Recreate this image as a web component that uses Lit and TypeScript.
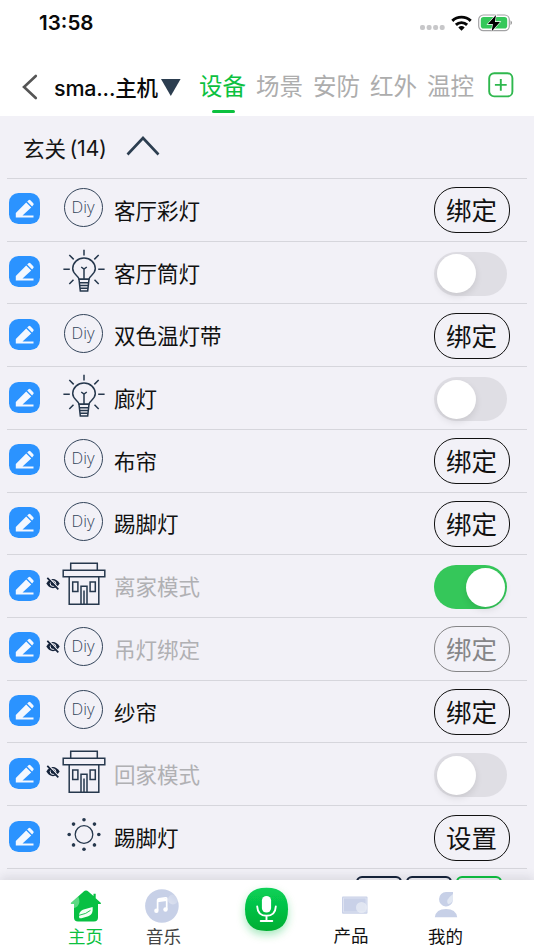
import { LitElement, html, css, svg, nothing } from "lit";
import { customElement, property } from "lit/decorators.js";
import { classMap } from "lit/directives/class-map.js";

type IconName = "diy" | "bulb" | "house" | "sun";
type Control = "bind" | "set" | "on" | "off";

interface Device {
  name: string;
  icon: IconName;
  control: Control;
  hidden?: boolean;
}

const DEVICES: Device[] = [
  { name: "客厅彩灯", icon: "diy", control: "bind" },
  { name: "客厅筒灯", icon: "bulb", control: "off" },
  { name: "双色温灯带", icon: "diy", control: "bind" },
  { name: "廊灯", icon: "bulb", control: "off" },
  { name: "布帘", icon: "diy", control: "bind" },
  { name: "踢脚灯", icon: "diy", control: "bind" },
  { name: "离家模式", icon: "house", control: "on", hidden: true },
  { name: "吊灯绑定", icon: "diy", control: "bind", hidden: true },
  { name: "纱帘", icon: "diy", control: "bind" },
  { name: "回家模式", icon: "house", control: "off", hidden: true },
  { name: "踢脚灯", icon: "sun", control: "set" },
];

const INK = "#26384d";

const deviceIcons = {
  bulb: svg`
    <g fill="none" stroke=${INK} stroke-width="1.5">
      <path d="M17.2 30.300C16.700 26.600 10.700 25.600 10.700 19.600a11.300 10.600 0 0 1 22.600 0C33.300 25.600 27.300 26.600 26.800 30.300Z"/>
      <path d="M17 30.300h10l-1.300 11.600h-7.400zM17.500 33.800h9M17.800 36.500h8.400M18.200 39.200h7.600"/>
      <path d="M22 30V19.600M19.200 18l2.800 2 2.800-2"/>
      <path d="M22 .7v5.800M1.400 20.200h6.400M36.200 20.200h6.400M7.300 6l4.400 4.400M36.700 6l-4.400 4.400M7.300 35l4.200-4.200M36.700 35l-4.200-4.200"/>
    </g>`,
  house: svg`
    <g fill="none" stroke=${INK} stroke-width="1.500">
      <path d="M8.700 7.600V1.300h26.600v6.300M1.200 8.200h41.600v6.600H1.200zM7.200 14.800h29.600v27.400H7.200zM10.700 20h5.200v9.400h-5.200zM28.100 20h5.200v9.400h-5.200zM19 42V24.200h6V42M22 42V28.500"/>
    </g>`,
  sun: svg`
    <circle cx="22" cy="21.500" r="8.800" fill="none" stroke=${INK} stroke-width="1.300"/>
    <g fill=${INK}>
      ${[0, 45, 90, 135, 180, 225, 270, 315].map(
        (a) => svg`<circle cx="22" cy="6.700" r="1.800" transform="rotate(${a} 22 21.5)"/>`,
      )}
    </g>`,
};

@customElement("device-row")
export class DeviceRow extends LitElement {
  @property({ attribute: false }) device!: Device;

  static styles = css`
    :host { display: block; }
    .row {
      box-sizing: border-box;
      height: 62.73px;
      margin: 0 7px;
      border-bottom: 1.5px solid #d6d6dc;
      display: grid;
      grid-template-columns: 38px 17px 45px 1fr auto;
      align-items: center;
      color: #111;
    }
    .edit { display: block; width: 31px; height: 31px; margin: 0 0 2px 1.6px; }
    .eye { display: block; width: 14px; height: 13px; margin: 0 0 5px 0.5px; }
    .icon {
      display: flex; justify-content: center; align-items: center;
      width: 44px; height: 44px; margin-bottom: 4px;
    }
    .icon svg { display: block; width: 44px; height: 44px; flex: none; }
    .diy-slot { width: 43px; }
    .diy {
      box-sizing: border-box; width: 39px; height: 39px; border-radius: 50%;
      border: 1.4px solid #33445a; color: #33445a;
      font: 300 16.500px/35px "Open Sans", "Inter", sans-serif;
      text-align: center; text-indent: -1px;
    }
    .name {
      font-size: 21.500px; line-height: 30px; margin: 0 0 0 7px; white-space: nowrap;
    }
    .muted { color: #b0b0b3; }
    .pill {
      box-sizing: border-box; width: 76px; height: 46px; margin: 1px 17px 0 0;
      border: 1.700px solid #111; border-radius: 22px; color: #111;
      font: 400 25.500px/42px "Noto Sans CJK SC", sans-serif;
      text-align: center; text-indent: -1px;
    }
    .pill.muted { color: #858587; border-color: #858587; }
    .toggle {
      box-sizing: border-box; width: 73px; height: 44px; border-radius: 22px;
      margin: 2px 20px 0 0; padding: 2.500px; background: #dfdee4; display: flex;
    }
    .toggle.on { background: #35c75a; justify-content: flex-end; }
    .knob {
      width: 39px; height: 39px; border-radius: 50%; background: #fff;
      box-shadow: 0 3px 7px rgba(0, 0, 0, 0.1);
    }
  `;

  private renderControl(d: Device) {
    if (d.control === "on" || d.control === "off") {
      return html`<div class=${classMap({ toggle: true, on: d.control === "on" })}><div class="knob"></div></div>`;
    }
    return html`<div class=${classMap({ pill: true, muted: !!d.hidden })}>${d.control === "bind" ? "绑定" : "设置"}</div>`;
  }

  render() {
    const d = this.device;
    return html`
      <div class="row">
        <svg class="edit" viewBox="0 0 31 31">
          <rect width="31" height="31" rx="9.500" fill="#2b93ff"/>
          <g fill="#f4f8ff">
            <path d="M6.800 24.400V19.900L17.200 9.500l5 5L13.500 22.500H24.500v1.900z"/>
            <path d="M18.200 8.600l1.300-1.300q1-.9 1.900 0l2.900 2.900q.9.900 0 1.900L23.100 13.500z"/>
          </g>
        </svg>
        ${d.hidden
          ? html`<svg class="eye" viewBox="0 0 14 13">
              <path d="M.3 6.600Q3.200 2 7 2t6.700 4.600Q10.800 11.200 7 11.200T.3 6.600z" fill="#15233a"/>
              <circle cx="7" cy="6.600" r="2.800" fill="#15233a" stroke="#f2f1f7" stroke-width="1"/>
              <path d="M2.700.3l10.300 11.200" stroke="#f2f1f7" stroke-width="1.300"/>
              <path d="M1.300 .8l11 11.600" stroke="#15233a" stroke-width="1.700"/>
            </svg>`
          : html`<span></span>`}
        <div class=${classMap({ icon: true, "diy-slot": d.icon === "diy" })}>
          ${d.icon === "diy"
            ? html`<div class="diy">Diy</div>`
            : html`<svg viewBox="0 0 44 44">${deviceIcons[d.icon]}</svg>`}
        </div>
        <div class=${classMap({ name: true, muted: !!d.hidden })}>${d.name}</div>
        ${this.renderControl(d)}
      </div>
    `;
  }
}

@customElement("app-root")
export class AppRoot extends LitElement {
  static styles = css`
    :host {
      display: flex; flex-direction: column; width: 534px; height: 950px;
      overflow: hidden; background: #f2f1f7; color: #111;
      font-family: "Noto Sans CJK SC", sans-serif;
    }
    .status {
      height: 46px; flex: none; background: #fff; display: flex; align-items: center;
      justify-content: space-between; padding: 0 21px 0 39px;
    }
    .time { font: 600 20.600px/46px "Inter", sans-serif; color: #0a0a0a; }
    .indicators { display: flex; align-items: center; }
    .indicators svg { display: block; }
    .dots { margin: 9px 6px 0 0; }
    .wifi { margin: 0 6px 1px 0; }
    .nav { height: 70px; flex: none; background: #fff; display: flex; align-items: flex-start; }
    .back { display: block; margin: 28px 0 0 21px; }
    .host {
      margin: 25px 0 0 16px; width: 106px; white-space: nowrap;
      font: 500 21.500px/34px "Inter", "Noto Sans CJK SC", sans-serif; letter-spacing: -0.200px; color: #0a0a0a;
    }
    .caret { display: block; margin: 33px 0 0 1px; }
    .tabs { display: flex; gap: 10px; margin-left: 18px; }
    .tab { width: 47px; height: 68px; font-size: 23.500px; line-height: 34px; padding-top: 22px; box-sizing: border-box;
      color: #adadad; white-space: nowrap; display: flex; flex-direction: column; align-items: center; }
    .tab.active { color: #0cc13f; }
    .bar { width: 23px; height: 3px; border-radius: 1.500px; background: #0cc13f; margin: 8px 0 0 2px; }
    .add { display: block; margin: 26px 0 0 13.500px; }
    .section {
      box-sizing: border-box; height: 63px; flex: none; margin: 0 7px; padding-left: 16px;
      border-bottom: 1.500px solid #d6d6dc; display: flex; align-items: center;
      font-size: 21.500px; color: #151515;
    }
    .count { font-family: "Inter", sans-serif; font-size: 21.500px; margin: 2px 0 0 3.500px; letter-spacing: -0.300px; }
    .chevron { display: block; margin: 0 0 2px 19.500px; }
    .list { flex: 1; min-height: 0; overflow: hidden; }
    .more { display: flex; gap: 4px; padding: 7px 0 0 356px; }
    .chip { box-sizing: border-box; width: 46px; height: 36px; border: 2.500px solid #15233a; border-radius: 6px; }
    .chip.green { border-color: #0cc13f; }
    .tabbar {
      position: relative; height: 70px; flex: none; background: #fff; display: grid;
      grid-template-columns: 126px 75px 130px 40px 149px;
      box-shadow: 0 -3px 10px rgba(40, 40, 60, 0.12);
    }
    .item { display: flex; flex-direction: column; align-items: center; }
    .item svg { display: block; flex: none; }
    .label { font-size: 17.500px; line-height: 24px; white-space: nowrap; }
    .home { padding-left: 45px; }
    .home .label { color: #0cc13f; margin-top: 2px; }
    .music .label { color: #444; }
    .music svg { margin-right: 3px; }
  `;

  render() {
    return html`
      <div class="status">
        <div class="time">13:58</div>
        <div class="indicators">
          <svg class="dots" width="25" height="5" viewBox="0 0 25 5" fill="#c7c7c9">
            <rect width="5" height="5" rx="2"/><rect x="6.600" width="5" height="5" rx="2"/>
            <rect x="13.100" width="5" height="5" rx="2"/><rect x="19.700" width="5" height="5" rx="2"/>
          </svg>
          <svg class="wifi" width="21" height="16" viewBox="0 0 21 16">
            <g fill="none" stroke="#050505" stroke-width="2.900">
              <path d="M1.300 5.900a13.200 13.200 0 0 1 18.400 0"/>
              <path d="M4.900 9.900a8 8 0 0 1 11.200 0"/>
            </g>
            <path d="M7.300 12.500a4.700 4.700 0 0 1 6.400 0L10.500 15.800z" fill="#050505"/>
          </svg>
          <svg width="35" height="18" viewBox="0 0 35 18">
            <rect x=".7" y="1" width="30.600" height="15.600" rx="4.600" fill="#fff" stroke="#a2a2a4" stroke-width="1.200"/>
            <rect x="2.800" y="3.100" width="26.400" height="11.400" rx="2.800" fill="#34c759"/>
            <path d="M32.600 6.300q2.400 2.500 0 5z" fill="#777"/>
            <path d="M18 .9L9.800 10.100H14.900L13.600 17.400 22 7.900H16.900z" fill="#000" stroke="#fff" stroke-width="1.200" paint-order="stroke"/>
          </svg>
        </div>
      </div>
      <div class="nav">
        <svg class="back" width="17" height="26" viewBox="0 0 17 26">
          <path d="M14.800 2L3 13l11.800 11" fill="none" stroke="#555" stroke-width="2.600" stroke-linecap="round"/>
        </svg>
        <div class="host">sma...主机</div>
        <svg class="caret" width="20" height="17" viewBox="0 0 20 17"><path d="M0 0h19.600L9.800 17z" fill="#2c3e50"/></svg>
        <div class="tabs">
          ${["设备", "场景", "安防", "红外", "温控"].map(
            (t, i) => html`<div class=${classMap({ tab: true, active: i === 0 })}>${t}${i === 0 ? html`<div class="bar"></div>` : nothing}</div>`,
          )}
        </div>
        <svg class="add" width="26" height="26" viewBox="0 0 26 26">
          <rect x="1.200" y="1.200" width="23.200" height="23.200" rx="5" fill="none" stroke="#2fb84e" stroke-width="1.900"/>
          <path d="M12.800 7v11.800M6.900 12.900h11.800" stroke="#2fb84e" stroke-width="1.900"/>
        </svg>
      </div>
      <div class="section">
        <span>玄关</span><span class="count">(14)</span>
        <svg class="chevron" width="34" height="20" viewBox="0 0 34 20">
          <path d="M1.500 18.500L17 2l15.500 16.500" fill="none" stroke="#2c3e50" stroke-width="2.600"/>
        </svg>
      </div>
      <div class="list">
        ${DEVICES.map((d) => html`<device-row .device=${d}></device-row>`)}
        <div class="more"><div class="chip"></div><div class="chip"></div><div class="chip green"></div></div>
      </div>
      <div class="tabbar">
        <div class="item home">
          <svg width="32" height="42" viewBox="0 0 32 42">
            <path d="M16 10.600q1.300 0 2.300 1L23.500 16v-2.300h2.200v4.500l5 4.500q1.100 1.200-.6 1.200H28v13.500q0 4-4 4H8q-4 0-4-4V24H1.800Q0 24 1.200 22.700L13.700 11.600q1-1 2.300-1z" fill="#08c043"/>
            <path d="M1.200 22.700L8.200 16.500Q10.900 22 7.500 26.300 5.500 28 4 28V24H1.800Q0 24 1.200 22.700z" fill="#8be6a6" opacity=".65"/>
            <path d="M9.400 38.300C8.200 33.500 10 30.500 14.500 29.200L22.600 27C23.200 32.500 21.500 35.500 17.500 36.500L11.500 38.300z" fill="#f4fff6"/>
            <path d="M9 35.300Q16.500 34 20.500 30.300" stroke="#08c043" stroke-width=".9" fill="none"/>
          </svg>
          <div class="label">主页</div>
        </div>
        <div class="item music">
          <svg width="34" height="44" viewBox="0 0 34 44">
            <defs><linearGradient id="shine" x1="1" y1="0" x2="0" y2="1"><stop offset="0" stop-color="#fff" stop-opacity=".05"/><stop offset="1" stop-color="#fff" stop-opacity=".4"/></linearGradient></defs>
            <circle cx="16.900" cy="26" r="16.800" fill="#c7d0e7"/>
            <circle cx="28" cy="19.500" r="5" fill="url(#shine)"/>
            <path d="M12.600 30V20.200q0-1.200 1.200-1.400l6.700-1q1.200-.1 1.200 1V28.900" fill="none" stroke="#fff" stroke-width="1.700"/>
            <path d="M12.500 19h9.200v1.900l-9.200 1.400z" fill="#fff"/>
            <circle cx="11.400" cy="30.800" r="2.200" fill="#fff"/><circle cx="20.500" cy="29.500" r="2.200" fill="#fff"/>
          </svg>
          <div class="label">音乐</div>
        </div>
        <div class="item">
          <svg width="66" height="66" viewBox="0 0 66 66">
            <defs>
              <linearGradient id="mic" x2="0" y2="1"><stop stop-color="#08d157"/><stop offset="1" stop-color="#02ae32"/></linearGradient>
              <filter id="glow" x="-50%" y="-50%" width="200%" height="200%"><feDropShadow dx="0" dy="4" stdDeviation="4" flood-color="#11bd43" flood-opacity=".35"/></filter>
            </defs>
            <path d="M33.500 7.700C48 7.700 55 14.500 55 29.300S48 51 33.500 51 12 44 12 29.300 19 7.700 33.500 7.700z" fill="url(#mic)" filter="url(#glow)"/>
            <rect x="28.900" y="16" width="9.200" height="16.500" rx="4.600" fill="#fff"/>
            <path d="M24.200 26.500q.5 9.300 9.300 9.300t9.300-9.300M33.500 36v4.500M27.700 41h11.600" fill="none" stroke="#fff" stroke-width="1.900" stroke-linecap="round"/>
          </svg>
        </div>
        <div class="item">
          <svg width="34" height="43" viewBox="0 0 34 43">
            <rect x="8" y="16.500" width="25.500" height="17.200" rx="1" fill="#c9d1e8"/>
            <rect x="9.600" y="18" width="22.500" height="14" fill="none" stroke="#e2e7f3" stroke-width=".8"/>
            <circle cx="27.500" cy="27.500" r="5.500" fill="#eef1f8" opacity=".65"/>
          </svg>
          <div class="label">产品</div>
        </div>
        <div class="item">
          <svg width="24" height="44" viewBox="0 0 24 44">
            <path d="M12.500 12H19v8a7 7.200 0 1 1-7-8z" fill="#c7d0e7"/>
            <path d="M19 14v6q-1.500 4-5 4-3-4 5-10z" fill="#e9edf6" opacity=".8"/>
            <path d="M.8 37.200Q2 29 12 29t11.200 8.200z" fill="#c7d0e7"/>
          </svg>
          <div class="label">我的</div>
        </div>
      </div>
    `;
  }
}
